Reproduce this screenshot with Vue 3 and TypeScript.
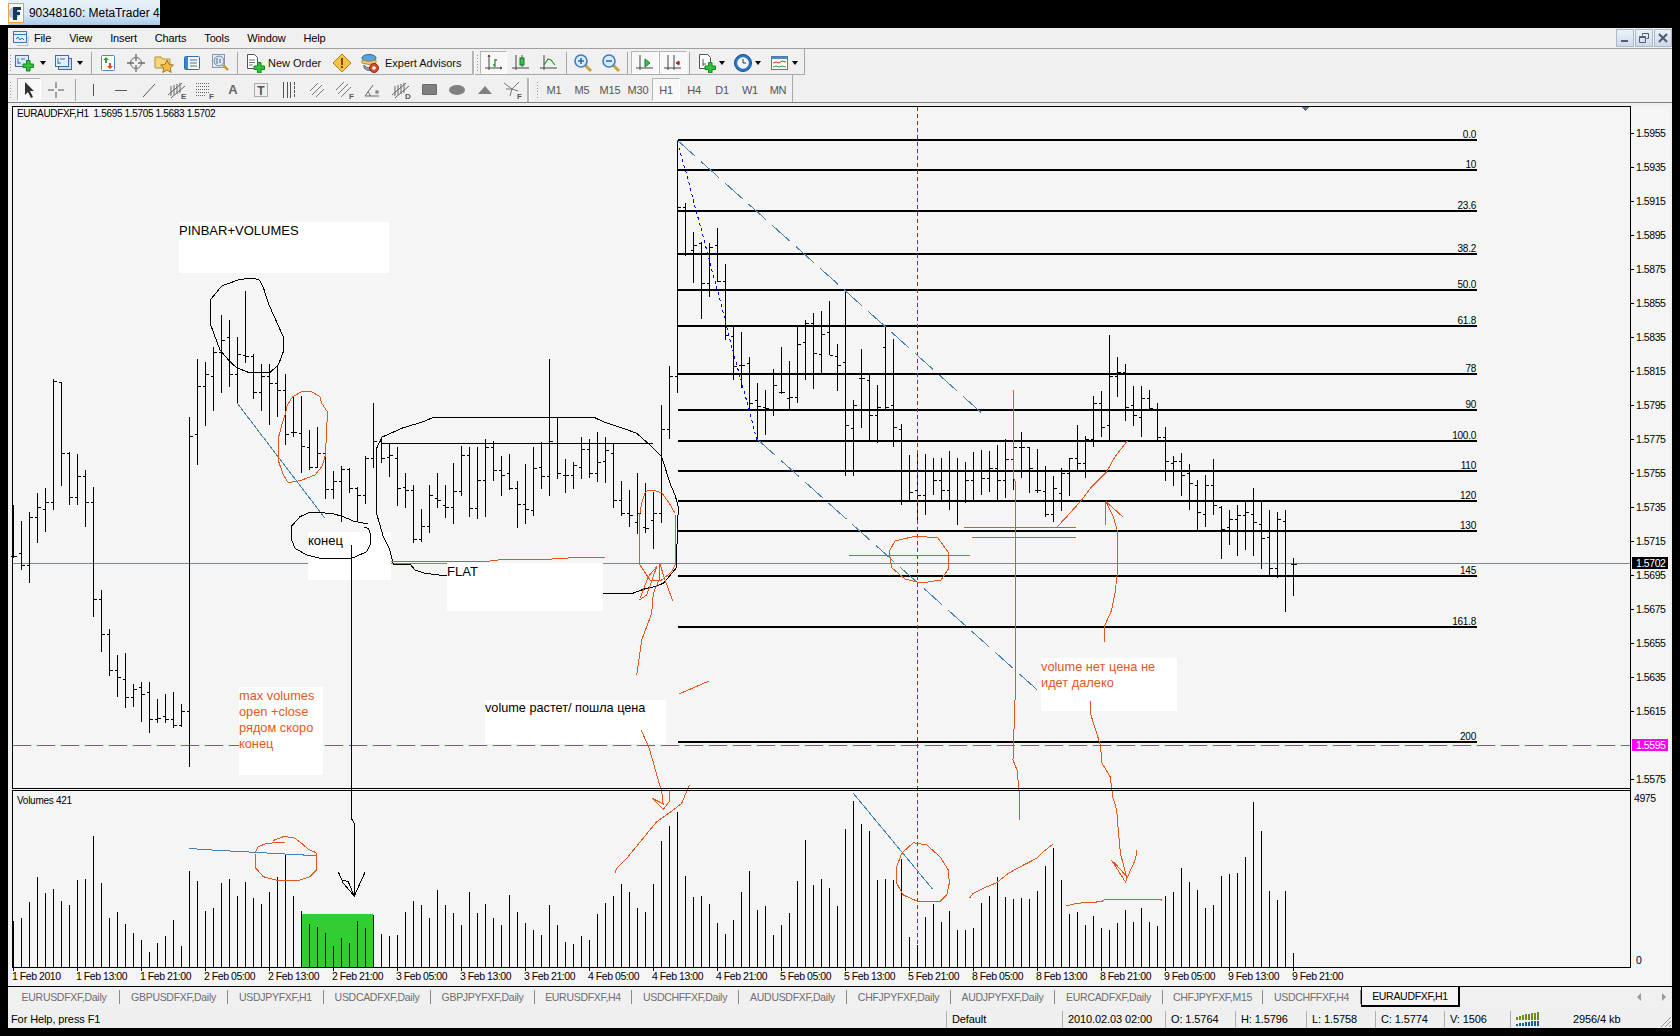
<script setup lang="ts">
/*
 * Chart data, all y values are page pixels
 */

type Bar = [number, number, number, number];

// high, low, open, close
const bars: Bar[] = [
  [505, 558, 556, 556], [521, 570, 553, 565], [512, 583, 565, 517], [493, 543, 517, 507], [488, 532, 509, 502],
  [379, 510, 502, 381], [383, 486, 382, 453], [452, 505, 453, 497], [454, 505, 497, 476], [470, 527, 476, 502],
  [487, 617, 502, 599], [590, 652, 599, 634], [629, 676, 634, 670], [655, 697, 670, 677], [653, 708, 679, 697],
  [684, 707, 697, 689], [682, 722, 687, 694], [682, 733, 692, 719], [699, 723, 719, 718], [694, 723, 716, 719],
  [692, 728, 719, 725], [704, 727, 725, 711], [417, 767, 711, 436], [359, 465, 434, 386], [362, 426, 386, 374],
  [347, 411, 376, 352], [315, 393, 352, 340], [320, 387, 337, 374], [337, 403, 374, 354], [291, 363, 355, 356],
  [354, 399, 356, 392], [364, 411, 392, 376], [364, 425, 376, 383], [366, 417, 383, 390], [374, 445, 390, 434],
  [397, 437, 432, 432], [396, 473, 433, 446], [430, 470, 447, 467], [427, 467, 467, 453], [449, 499, 453, 489],
  [471, 499, 489, 481], [466, 522, 481, 469], [468, 493, 469, 488], [487, 522, 488, 495], [456, 504, 495, 458],
  [403, 468, 458, 441], [437, 463, 441, 458], [443, 477, 457, 455], [447, 506, 458, 488], [473, 508, 487, 490],
  [485, 543, 490, 539], [509, 542, 539, 526], [485, 533, 526, 495], [473, 508, 498, 500], [485, 518, 505, 507],
  [463, 524, 507, 491], [446, 496, 491, 455], [447, 517, 455, 508], [447, 519, 508, 480], [439, 517, 480, 447],
  [441, 481, 447, 470], [456, 496, 470, 475], [454, 490, 473, 488], [481, 528, 488, 504], [464, 524, 504, 509],
  [447, 516, 510, 468], [442, 489, 467, 476], [359, 496, 476, 441], [417, 479, 443, 473], [459, 493, 475, 475],
  [462, 489, 475, 465], [437, 479, 467, 449], [439, 478, 449, 473], [432, 482, 473, 462], [437, 483, 461, 450],
  [443, 508, 453, 500], [481, 516, 500, 513], [490, 527, 513, 515], [473, 534, 522, 513], [483, 533, 527, 528],
  [492, 549, 520, 513], [405, 523, 513, 429], [366, 439, 429, 376], [141, 393, 376, 207], [203, 256, 207, 253],
  [232, 283, 250, 245], [242, 319, 243, 283], [243, 297, 283, 247], [228, 282, 245, 281], [264, 340, 281, 335],
  [327, 380, 336, 366], [332, 388, 365, 365], [357, 409, 363, 403], [383, 441, 400, 406], [390, 435, 407, 408],
  [369, 416, 410, 385], [347, 394, 392, 392], [361, 409, 398, 397], [327, 403, 397, 344], [320, 380, 342, 323],
  [313, 389, 323, 353], [311, 373, 354, 334], [301, 355, 332, 355], [344, 391, 356, 365], [290, 476, 362, 425],
  [400, 476, 428, 405], [349, 428, 378, 378], [374, 440, 380, 415], [385, 443, 415, 407], [327, 409, 347, 407],
  [339, 447, 405, 427], [424, 505, 429, 470], [455, 500, 470, 492], [450, 520, 490, 495], [454, 515, 495, 470],
  [458, 495, 470, 480], [458, 502, 480, 490], [451, 510, 490, 470], [458, 525, 470, 500], [462, 503, 500, 480],
  [452, 500, 480, 470], [450, 495, 470, 478], [451, 492, 478, 468], [445, 500, 468, 480], [439, 498, 480, 459],
  [430, 490, 459, 447], [432, 478, 447, 447], [447, 493, 447, 468], [449, 493, 490, 490], [466, 517, 491, 514],
  [476, 522, 514, 488], [468, 511, 493, 473], [458, 496, 473, 458], [425, 470, 458, 463], [436, 478, 463, 439],
  [396, 447, 439, 403], [391, 437, 403, 427], [335, 440, 425, 376], [357, 397, 376, 372], [364, 421, 372, 407],
  [386, 426, 405, 415], [386, 437, 417, 398], [390, 409, 398, 408], [403, 440, 409, 437], [427, 481, 437, 461],
  [456, 486, 463, 461], [453, 496, 461, 475], [464, 510, 473, 483], [480, 532, 485, 512], [475, 527, 514, 485],
  [459, 515, 485, 505], [506, 559, 507, 529], [510, 545, 527, 519], [505, 556, 519, 515], [501, 550, 515, 512],
  [488, 556, 514, 522], [501, 569, 524, 538], [510, 577, 537, 568], [512, 578, 568, 519], [510, 612, 521, 576],
  [558, 596, 564, 564],
];

// top of every volume bar, they all stand on y=967
const volumes: number[] = [
  921, 918, 902, 877, 893, 889, 901, 905, 880, 879, 836, 883, 918, 912, 924, 933, 940, 952, 943, 936,
  920, 946, 871, 881, 911, 908, 883, 879, 896, 882, 898, 904, 892, 877, 854, 896, 911, 924, 927, 933,
  946, 938, 943, 921, 928, 915, 934, 936, 935, 912, 901, 905, 918, 890, 905, 913, 925, 892, 913, 904,
  918, 925, 895, 912, 923, 930, 935, 905, 925, 942, 944, 936, 940, 914, 903, 896, 884, 892, 908, 912,
  884, 841, 826, 812, 876, 897, 896, 904, 923, 934, 920, 892, 871, 910, 906, 935, 925, 913, 881, 840,
  885, 879, 888, 906, 829, 801, 824, 831, 880, 879, 880, 859, 937, 945, 917, 904, 922, 911, 930, 930,
  928, 903, 896, 877, 897, 899, 898, 899, 891, 866, 848, 880, 914, 912, 925, 916, 928, 930, 923, 910,
  922, 908, 922, 926, 896, 892, 868, 882, 890, 908, 905, 876, 874, 873, 857, 802, 831, 891, 900, 891,
  953,
];

const fibLevels = [
  { y: 140, label: "0.0" },
  { y: 170, label: "10" },
  { y: 211, label: "23.6" },
  { y: 254, label: "38.2" },
  { y: 290, label: "50.0" },
  { y: 326, label: "61.8" },
  { y: 374, label: "78" },
  { y: 410, label: "90" },
  { y: 441, label: "100.0" },
  { y: 471, label: "110" },
  { y: 501, label: "120" },
  { y: 531, label: "130" },
  { y: 576, label: "145" },
  { y: 627, label: "161.8" },
  { y: 742, label: "200" },
];

const priceLabels = Array.from({ length: 20 }, (_, i) => ({
  y: 133 + 34 * i,
  text: (1.5955 - 0.002 * i).toFixed(4),
})).filter((p) => p.text !== "1.5595");

const timeLabels = [
  "1 Feb 2010", "1 Feb 13:00", "1 Feb 21:00", "2 Feb 05:00", "2 Feb 13:00", "2 Feb 21:00", "3 Feb 05:00",
  "3 Feb 13:00", "3 Feb 21:00", "4 Feb 05:00", "4 Feb 13:00", "4 Feb 21:00", "5 Feb 05:00", "5 Feb 13:00",
  "5 Feb 21:00", "8 Feb 05:00", "8 Feb 13:00", "8 Feb 21:00", "9 Feb 05:00", "9 Feb 13:00", "9 Feb 21:00",
];

const chartCaption = "EURAUDFXF,H1  1.5695 1.5705 1.5683 1.5702";

const barsPath = bars
  .map((b, i) => {
    const x = 13.5 + 8 * i;
    return `M${x} ${b[0]}V${b[1]}M${x - 3} ${b[2] + 0.5}H${x}M${x} ${b[3] + 0.5}H${x + 3}`;
  })
  .join("");

const volumesPath = volumes.map((top, i) => `M${13.5 + 8 * i} ${top}V967`).join("");

/*
 * Hand drawn marks, traced from crops: origin, horizontal scale, then x,y pairs
 */

function trace(ox: number, oy: number, sx: number, raw: number[]) {
  const out: string[] = [];
  for (let i = 0; i < raw.length; i += 2) {
    out.push(`${(ox + raw[i] / sx).toFixed(1)},${(oy + raw[i + 1] / 3).toFixed(1)}`);
  }
  return out.join(" ");
}

const blueLines = [
  trace(0, 200, 3, [712, 610, 975, 955]),
  trace(0, 560, 3, [567, 865, 600, 868, 650, 871, 705, 874, 765, 877, 815, 880, 870, 883, 950, 887]),
  trace(560, 760, 3, [880, 100, 1118, 388]),
];

const blackMarks = [
  trace(0, 200, 3, [760, 235, 778, 240, 790, 262, 805, 310, 825, 355, 850, 410, 850, 455, 835, 495, 810, 517, 745, 517, 710, 503, 690, 485, 660, 450, 632, 375, 631, 300, 665, 258, 720, 238, 760, 235]),
  trace(0, 200, 3, [1105, 972, 1060, 963, 1030, 950, 995, 940, 930, 937, 900, 950, 875, 978, 875, 1020, 885, 1045, 920, 1065, 960, 1075, 1055, 1075, 1100, 1055, 1112, 1030, 1112, 1005, 1105, 985, 1092, 982]),
  trace(0, 560, 3, [1054, -45, 1054, 775, 1063, 790, 1063, 1005]),
  trace(0, 560, 3, [1015, 935, 1030, 970, 1063, 1008, 1095, 937]),
  trace(0, 560, 3, [1015, 935, 1025, 960, 1045, 965, 1055, 990, 1063, 1008]),
  trace(360, 340, 3, [100, 672, 88, 625, 70, 590, 50, 522, 50, 325, 65, 292, 130, 263, 190, 245, 220, 232, 702, 232, 730, 245, 790, 265, 830, 280, 870, 315, 905, 350, 930, 430, 945, 465, 955, 500, 952, 590, 948, 685, 910, 730, 890, 738, 850, 748, 818, 760, 730, 760]),
  trace(360, 340, 3, [100, 672, 150, 672, 165, 690, 195, 700, 262, 708]),
  trace(360, 340, 3, [62, 310, 878, 310]),
];

const redMarks = [
  trace(0, 200, 3, [905, 575, 935, 575, 960, 590, 965, 610, 982, 635, 980, 700, 975, 770, 965, 800, 945, 825, 900, 842, 865, 848, 850, 825, 836, 785, 835, 715, 845, 675, 855, 645, 862, 615, 878, 590, 905, 575]),
  trace(360, 340, 3, [92, 664, 385, 664, 420, 659, 560, 658, 640, 653, 735, 653]),
  trace(360, 340, 3, [860, 452, 880, 451, 905, 458, 928, 490, 945, 520, 947, 670, 935, 695, 905, 720, 870, 720, 838, 672, 838, 530, 845, 490, 855, 460, 860, 452]),
  trace(360, 340, 3, [838, 780, 860, 765, 890, 680, 865, 710, 840, 775]),
  trace(360, 340, 3, [900, 672, 897, 720, 880, 760, 875, 820, 860, 860, 845, 900, 830, 1005]),
  trace(360, 340, 3, [900, 672, 915, 720, 938, 782]),
  "641,730 648,745 652.7,760 656.7,775 661.7,791.7 663.3,805",
  "679,694 709,681",
  trace(560, 760, 3, [277, 115, 310, 148, 328, 125, 330, 90]),
  trace(560, 760, 3, [277, 115, 310, 132]),
  trace(560, 760, 3, [165, 340, 170, 325, 200, 295, 245, 240, 290, 185, 340, 150, 365, 130, 388, 75]),
  trace(560, 760, 3, [1060, 248, 1100, 255, 1140, 290, 1165, 330, 1168, 370, 1160, 405, 1140, 425, 1075, 425, 1030, 405, 1010, 370, 1010, 320, 1025, 280, 1060, 248]),
  "1013,390 1013,477 1015,481 1015,700 1013,760 1017,770 1019,790 1020,820",
  trace(560, 760, 3, [1228, 415, 1240, 400, 1270, 385, 1310, 368, 1345, 340, 1385, 318, 1430, 295, 1450, 275, 1478, 253]),
  "964,527 1076,527",
  "972,537 1076,537",
  trace(1000, 320, 3, [172, 620, 200, 590, 245, 540, 275, 500, 320, 455, 345, 410, 382, 363]),
  trace(1000, 320, 3, [313, 965, 313, 920, 335, 870, 345, 820, 352, 760, 352, 633, 340, 590, 318, 545, 316, 615]),
  trace(1000, 320, 3, [318, 545, 368, 590]),
  "849,555 970,555",
  "895,541 916,536 938,538 948,552 949,568 941,580 921,583 905,579 892,568 889,552 895,541",
  trace(0, 560, 3, [818, 842, 850, 830, 880, 832, 905, 850, 925, 868, 948, 878, 950, 930, 930, 950, 895, 962, 835, 962, 790, 950, 768, 925, 765, 880, 775, 860, 800, 850, 855, 847]),
  trace(1040, 640, 2.45, [65, 798, 90, 790, 150, 785, 160, 778, 298, 778, 298, 782]),
  trace(1040, 640, 2.45, [123, 183, 124, 222, 135, 265, 148, 315, 152, 370, 172, 410, 178, 470, 188, 510, 192, 575, 197, 640, 213, 715]),
  trace(1040, 640, 2.45, [213, 715, 235, 655, 236, 630]),
  trace(1040, 640, 2.45, [175, 660, 210, 727, 213, 710, 180, 665]),
];

const dotted = trace(660, 120, 3, [52, 65, 70, 130, 85, 180, 105, 260, 130, 350, 150, 430, 175, 520, 195, 600, 215, 680, 240, 770, 265, 860, 290, 960]);

/*
 * Window chrome
 */

const menuItems = ["File", "View", "Insert", "Charts", "Tools", "Window", "Help"];
const periods = ["M1", "M5", "M15", "M30", "H1", "H4", "D1", "W1", "MN"];

const chartTabs = [
  { name: "EURUSDFXF,Daily", width: 111 },
  { name: "GBPUSDFXF,Daily", width: 108 },
  { name: "USDJPYFXF,H1", width: 96 },
  { name: "USDCADFXF,Daily", width: 107 },
  { name: "GBPJPYFXF,Daily", width: 104 },
  { name: "EURUSDFXF,H4", width: 97 },
  { name: "USDCHFFXF,Daily", width: 107 },
  { name: "AUDUSDFXF,Daily", width: 108 },
  { name: "CHFJPYFXF,Daily", width: 104 },
  { name: "AUDJPYFXF,Daily", width: 104 },
  { name: "EURCADFXF,Daily", width: 108 },
  { name: "CHFJPYFXF,M15", width: 100 },
  { name: "USDCHFFXF,H4", width: 98 },
];

const statusCells = [
  { text: "Default", width: 116 },
  { text: "2010.02.03 02:00", width: 103 },
  { text: "O: 1.5764", width: 70 },
  { text: "H: 1.5796", width: 71 },
  { text: "L: 1.5758", width: 69 },
  { text: "C: 1.5774", width: 69 },
  { text: "V: 1506", width: 66 },
];
</script>

<template>
  <div class="screen">
    <div class="titlebar">
      <div class="title-pad"></div>
      <div class="title-tab">
        <svg class="logo" width="16" height="20" viewBox="0 0 16 20">
          <rect x="0.5" y="0.5" width="15" height="19" fill="#fff" stroke="#f0a030" />
          <circle cx="6" cy="10" r="5.5" fill="#b9c6d6" />
          <path d="M5 4h8v3H9v2h3v3H9v5H5z" fill="#12395f" />
        </svg>
        <span class="title-text">90348160: MetaTrader 4</span>
      </div>
    </div>

    <div class="window">
      <div class="menubar">
        <svg class="doc-icon" width="16" height="17" viewBox="0 0 16 17">
          <rect x="0.5" y="1.5" width="13" height="11" fill="#e2eefa" stroke="#3f78b8" />
          <path d="M0.5 4.5h13" stroke="#3f78b8" />
          <path d="M4 15.5h11V6" fill="none" stroke="#a9c4e4" />
          <path d="M3 9l2-2 2 3 2-2 2 2" fill="none" stroke="#2f6fb0" />
        </svg>
        <span v-for="item in menuItems" :key="item" class="menu-item">{{ item }}</span>
        <div class="win-buttons">
          <button class="win-btn">
            <svg width="10" height="10" viewBox="0 0 10 10"><rect x="1" y="7" width="7" height="2" fill="#4f6074" /></svg>
          </button>
          <button class="win-btn">
            <svg width="10" height="10" viewBox="0 0 10 10"><path d="M3.5 2.5V.5h6v5h-2M.5 3.5h6v6h-6zM.5 4.5h6" fill="none" stroke="#4f6074" /></svg>
          </button>
          <button class="win-btn">
            <svg width="10" height="10" viewBox="0 0 10 10"><path d="M1 1l8 8M9 1l-8 8" stroke="#4f6074" stroke-width="2.2" /></svg>
          </button>
        </div>
      </div>

      <div class="toolbars">
        <div class="tools row-one">
          <span class="grip"></span>
          <span class="ico-box w20">
            <svg width="20" height="20" viewBox="0 0 20 20">
              <rect x="0.5" y="2.5" width="13" height="11" fill="#dcebfa" stroke="#3c6ea5" />
              <path d="M3 5v6M3 10h3M6 6h4" stroke="#3c6ea5" fill="none" />
              <path d="M8 11h3.500V7.500h3.500V11h3.500v3.500H15V18h-3.500v-3.500H8z" fill="#2fc43b" stroke="#12851c" />
            </svg>
          </span>
          <span class="drop w16"></span>
          <span class="ico-box w20 ml3">
            <svg width="20" height="20" viewBox="0 0 20 20">
              <rect x="4.500" y="5.500" width="13" height="11" fill="#c9ddf2" stroke="#3c6ea5" />
              <rect x="1.500" y="2.500" width="13" height="11" fill="#e6f0fb" stroke="#3c6ea5" />
              <path d="M4 5v6M4 10h3M6 6h5" stroke="#3c6ea5" fill="none" />
            </svg>
          </span>
          <span class="drop w12"></span>
          <span class="sep ml5"></span>
          <span class="btn ml2">
            <svg width="20" height="20" viewBox="0 0 20 20">
              <rect x="3.500" y="2.500" width="13" height="15" rx="1" fill="#fff" stroke="#4f87c4" />
              <path d="M8 4l3 3H9v3H7V7H5z" fill="#27a33a" />
              <path d="M12 16l-3-3h2v-3h2v3h2z" fill="#d9482b" />
            </svg>
          </span>
          <span class="btn">
            <svg width="20" height="20" viewBox="0 0 20 20" fill="none" stroke="#6b6b6b">
              <circle cx="10" cy="10" r="5.500" />
              <path d="M10 1v7M10 12v7M1 10h7M12 10h7" stroke-width="1.300" />
            </svg>
          </span>
          <span class="btn">
            <svg width="20" height="20" viewBox="0 0 20 20">
              <path d="M1 4h6l2 2h7v9H1z" fill="#f5d77e" stroke="#b98f2e" />
              <path d="M13 7l2 4.500 4.500.500-3.300 3 1 4.500-4.200-2.400-4.200 2.400 1-4.500-3.300-3 4.500-.500z" fill="#f0c040" stroke="#a3742a" />
            </svg>
          </span>
          <span class="btn">
            <svg width="20" height="20" viewBox="0 0 20 20">
              <rect x="2.500" y="3.500" width="15" height="13" rx="1" fill="#f5f9fe" stroke="#2a6cb0" />
              <rect x="3" y="4" width="3" height="12" fill="#3c87cf" />
              <path d="M8 7h7M8 10h7M8 13h7" stroke="#4a6c90" />
            </svg>
          </span>
          <span class="btn">
            <svg width="20" height="20" viewBox="0 0 20 20">
              <rect x="2.500" y="1.500" width="12" height="13" fill="#e8edf3" stroke="#8a98a8" />
              <circle cx="9" cy="8" r="5" fill="#d7e6f5" stroke="#6a88a8" />
              <path d="M7 5v6M10 6v4" stroke="#5a6c80" />
              <path d="M13 12l5 5" stroke="#c9932e" stroke-width="2.400" />
            </svg>
          </span>
          <span class="sep ml3"></span>
          <span class="ico-box w20 ml7">
            <svg width="20" height="20" viewBox="0 0 20 20">
              <path d="M2.500 1.500h7l3 3v11h-10z" fill="#fff" stroke="#555" />
              <path d="M4 7h6M4 9.500h6M4 12h4" stroke="#777" />
              <path d="M9 13h3.500V9.500H16V13h3.500v3.500H16V20h-3.500v-3.500H9z" fill="#2fc43b" stroke="#12851c" />
            </svg>
          </span>
          <span class="tool-text order-text">New Order</span>
          <span class="btn ml5">
            <svg width="20" height="20" viewBox="0 0 20 20">
              <path d="M10 1l9 9-9 9-9-9z" fill="#f6c344" stroke="#b97f1c" />
              <rect x="9" y="5" width="2" height="7" fill="#7a4a10" />
              <rect x="9" y="13" width="2" height="2" fill="#7a4a10" />
            </svg>
          </span>
          <span class="btn">
            <svg width="22" height="22" viewBox="0 0 22 22">
              <ellipse cx="10" cy="6" rx="7" ry="3.500" fill="#5aa4dc" stroke="#28689c" />
              <path d="M3 8q7 3 14 0v3q-7 3-14 0z" fill="#f2c778" stroke="#b98f2e" />
              <path d="M5 13q5 6 10 0v3q-5 5-10 0z" fill="#8ea6bf" stroke="#52687e" />
              <circle cx="15" cy="16" r="4.500" fill="#d9482b" stroke="#8f2c14" />
              <circle cx="15" cy="16" r="1.800" fill="#fff" />
            </svg>
          </span>
          <span class="tool-text advisors-text">Expert Advisors</span>
          <span class="split ml10"></span>
          <span class="grip grip-small"></span>
          <span class="btn active w27">
            <svg width="20" height="20" viewBox="0 0 20 20" fill="none" stroke="#444">
              <path d="M5 2v15M1 15h17M5 2l-1 2M5 2l1 2M18 15l-2-1M18 15l-2 1" />
              <path d="M11 6v8M9 12h2M11 7h2" stroke="#1e9a35" stroke-width="1.300" />
            </svg>
          </span>
          <span class="btn">
            <svg width="20" height="20" viewBox="0 0 20 20" fill="none" stroke="#444">
              <path d="M5 2v15M1 15h17" />
              <path d="M11 2v12" stroke="#1b6e2a" />
              <rect x="9" y="5" width="4" height="7" fill="#39c24a" stroke="#1b6e2a" />
            </svg>
          </span>
          <span class="btn">
            <svg width="20" height="20" viewBox="0 0 20 20" fill="none" stroke="#444">
              <path d="M5 2v15M1 15h17" />
              <path d="M5 12l4-6 3 1 4 5" stroke="#1e9a35" stroke-width="1.200" />
            </svg>
          </span>
          <span class="sep ml3"></span>
          <span class="btn ml2">
            <svg width="20" height="20" viewBox="0 0 20 20">
              <path d="M12 12l6 6" stroke="#c9a33e" stroke-width="3" />
              <circle cx="8" cy="8" r="6" fill="#dcebfa" stroke="#3c7dbf" stroke-width="1.600" />
              <path d="M5 8h6M8 5v6" stroke="#2a6cb0" stroke-width="1.600" />
            </svg>
          </span>
          <span class="btn">
            <svg width="20" height="20" viewBox="0 0 20 20">
              <path d="M12 12l6 6" stroke="#c9a33e" stroke-width="3" />
              <circle cx="8" cy="8" r="6" fill="#dcebfa" stroke="#3c7dbf" stroke-width="1.600" />
              <path d="M5 8h6" stroke="#2a6cb0" stroke-width="1.600" />
            </svg>
          </span>
          <span class="sep ml2"></span>
          <span class="btn active ml3">
            <svg width="20" height="20" viewBox="0 0 20 20" fill="none" stroke="#444">
              <path d="M5 2v15M1 15h17" />
              <path d="M10 6l5 4-5 4z" fill="#39c24a" stroke="#1b7d2c" />
            </svg>
          </span>
          <span class="btn active">
            <svg width="20" height="20" viewBox="0 0 20 20" fill="none" stroke="#444">
              <path d="M5 2v15M1 15h17M11 2v15" />
              <path d="M17 10h-3M16 8l-3 2 3 2z" fill="#a32a1a" stroke="#a32a1a" />
            </svg>
          </span>
          <span class="sep ml2"></span>
          <span class="ico-box w20 ml7">
            <svg width="20" height="20" viewBox="0 0 20 20">
              <path d="M2.500 1.500h8l3 3v11h-11z" fill="#fff" stroke="#555" />
              <path d="M6 6v7M6 11h3" stroke="#555" />
              <path d="M8 13h3.500V9.500H15V13h3.500v3.500H15V20h-3.500v-3.500H8z" fill="#2fc43b" stroke="#12851c" />
            </svg>
          </span>
          <span class="drop w10"></span>
          <span class="ico-box w20 ml6">
            <svg width="20" height="20" viewBox="0 0 20 20">
              <circle cx="10" cy="10" r="8.500" fill="#2d78c4" stroke="#174e8c" />
              <circle cx="10" cy="10" r="5.800" fill="#f3f6fa" />
              <path d="M10 6v4h3" fill="none" stroke="#333" />
            </svg>
          </span>
          <span class="drop w10"></span>
          <span class="ico-box w20 ml7">
            <svg width="20" height="20" viewBox="0 0 20 20">
              <rect x="1.500" y="3.500" width="16" height="13" fill="#fff" stroke="#4a7bb0" />
              <rect x="2" y="4" width="15" height="2" fill="#4a8ccc" />
              <path d="M3 10l3-1 3 1 3-2 4 1" fill="none" stroke="#c0392b" />
              <path d="M3 14l3-1 3 1 3-1 4 1" fill="none" stroke="#2f9e44" />
            </svg>
          </span>
          <span class="drop w10"></span>
        </div>

        <div class="tools row-two">
          <span class="grip"></span>
          <span class="btn active w24 ml2">
            <svg width="14" height="18" viewBox="0 0 14 18"><path d="M3 1l9 9H8l3 6-2 1-3-6-3 3z" fill="#333" /></svg>
          </span>
          <span class="btn ml1">
            <svg width="18" height="18" viewBox="0 0 18 18" stroke="#555"><path d="M9 1v6M9 11v6M1 9h6M11 9h6" /></svg>
          </span>
          <span class="sep ml5"></span>
          <span class="btn ml3"><svg width="18" height="18" viewBox="0 0 18 18" stroke="#555"><path d="M9.500 3v12" /></svg></span>
          <span class="btn"><svg width="18" height="18" viewBox="0 0 18 18" stroke="#555"><path d="M3 9.500h12" /></svg></span>
          <span class="btn"><svg width="18" height="18" viewBox="0 0 18 18" stroke="#555"><path d="M3 16L15 3" /></svg></span>
          <span class="btn">
            <svg width="22" height="20" viewBox="0 0 22 20" stroke="#666" fill="none">
              <path d="M2 15L16 3M5 18L19 6M5 6v10M8 5v10M11 4v10M14 3v10" />
              <text x="15" y="19" class="ico-letter">E</text>
            </svg>
          </span>
          <span class="btn">
            <svg width="22" height="20" viewBox="0 0 22 20" stroke="#666" fill="none">
              <path d="M2 3.500h14M2 6.500h14M2 9.500h14M2 12.500h14M2 15.500h10" stroke-dasharray="1 1" />
              <text x="15" y="19" class="ico-letter">F</text>
            </svg>
          </span>
          <span class="btn"><span class="ico-a">A</span></span>
          <span class="btn">
            <svg width="18" height="18" viewBox="0 0 18 18">
              <rect x="2.500" y="2.500" width="13" height="13" fill="none" stroke="#666" stroke-dasharray="1 1" />
              <text x="9" y="14" class="ico-t">T</text>
            </svg>
          </span>
          <span class="btn">
            <svg width="18" height="18" viewBox="0 0 18 18" stroke="#555"><path d="M3.500 1v16M7.500 1v16M10.500 1v16" /><path d="M14.500 1v16" stroke-dasharray="3 1" /></svg>
          </span>
          <span class="btn">
            <svg width="18" height="18" viewBox="0 0 18 18" stroke="#777"><path d="M2 10L10 2M4 14L14 4M8 16L16 8" /></svg>
          </span>
          <span class="btn">
            <svg width="22" height="20" viewBox="0 0 22 20" stroke="#777" fill="none">
              <path d="M2 10L10 2M4 14L14 4M7 17L17 7" />
              <text x="15" y="19" class="ico-letter">F</text>
            </svg>
          </span>
          <span class="btn">
            <svg width="20" height="18" viewBox="0 0 20 18" stroke="#666" fill="none">
              <path d="M2 15h14M2 15L10 4M7 15q0-3-2-4" />
              <rect x="13" y="10" width="2" height="2" />
            </svg>
          </span>
          <span class="btn">
            <svg width="22" height="20" viewBox="0 0 22 20" stroke="#666" fill="none">
              <path d="M2 15L16 3M5 18L19 6M5 6v10M8 5v10M11 4v10M14 3v10" />
              <text x="15" y="19" class="ico-letter">D</text>
            </svg>
          </span>
          <span class="btn"><span class="shape-rect"></span></span>
          <span class="btn"><span class="shape-ellipse"></span></span>
          <span class="btn"><span class="shape-tri"></span></span>
          <span class="btn">
            <svg width="22" height="20" viewBox="0 0 22 20" stroke="#777" fill="none">
              <path d="M2 3l8 6 7-7M10 9l-2 7M10 9l6 2M4 9l6 0" />
              <text x="15" y="19" class="ico-letter">F</text>
            </svg>
          </span>
          <span class="split"></span>
          <span class="grip grip-small ml6"></span>
          <span
            v-for="period in periods"
            :key="period"
            class="btn period"
            :class="{ active: period === 'H1' }"
          >{{ period }}</span>
        </div>
      </div>

      <div class="chart-area">
        <svg class="chart" width="1664" height="884" viewBox="8 103 1664 884">
          <rect x="12" y="106" width="1658" height="880" fill="#f5f5f5" />

          <!-- fibonacci levels -->
          <path v-for="lvl in fibLevels" :key="lvl.label" :d="`M678 ${lvl.y}H1477`" class="fib" />
          <text v-for="lvl in fibLevels" :key="lvl.label + 't'" x="1476" :y="lvl.y - 2" class="fib-label">{{ lvl.label }}</text>

          <path d="M13 563.500H1630" class="bid" />
          <path d="M13 745.500H1631" class="ask" />

          <rect x="301" y="914" width="72" height="53" fill="#32cd32" />
          <path :d="barsPath" class="ink" />
          <path :d="volumesPath" class="ink" />
          <path d="M677.500 140V393" class="ink" />

          <path d="M917.500 107V945" class="green-dash" />
          <polyline v-for="line in blueLines" :key="line" :points="line" class="mark steel" />
          <path d="M677 140L985 416" class="mark steel trend" />
          <path d="M757 439L1063 713" class="mark steel trend" />
          <polyline :points="dotted" class="mark dots" />

          <!-- text notes on white boxes -->
          <rect x="179" y="222" width="210" height="51" fill="#fff" />
          <rect x="308" y="532" width="83" height="48" fill="#fff" />
          <rect x="447" y="563" width="156" height="48" fill="#fff" />
          <rect x="485" y="700" width="181" height="44" fill="#fff" />
          <rect x="239" y="687" width="84" height="88" fill="#fff" />
          <rect x="1041" y="658" width="136" height="53" fill="#fff" />

          <text x="179" y="235" class="note">PINBAR+VOLUMES</text>
          <text x="308" y="545" class="note">конец</text>
          <text x="447" y="576" class="note">FLAT</text>
          <text x="485" y="712" class="note small">volume растет/ пошла цена</text>
          <text x="239" y="700" class="note red">max volumes</text>
          <text x="239" y="716" class="note red">open +close</text>
          <text x="239" y="732" class="note red">рядом скоро</text>
          <text x="239" y="748" class="note red">конец</text>
          <text x="1041" y="671" class="note red">volume нет цена не</text>
          <text x="1041" y="687" class="note red">идет далеко</text>

          <polyline v-for="line in blackMarks" :key="line" :points="line" class="mark black" />
          <polyline v-for="line in redMarks" :key="line" :points="line" class="mark orange" />

          <!-- frames and axes -->
          <path d="M12.500 788.500V106.500H1630.500V967.500H12.500V790.500H1630.500M12.500 788.500H1630.500" class="frame" />
          <path d="M1301 107h8l-4 4z" fill="#5f7284" />
          <text x="17" y="117" class="axis title caption">{{ chartCaption }}</text>
          <text x="17" y="804" class="axis title">Volumes 421</text>

          <g v-for="p in priceLabels" :key="p.text">
            <path :d="`M1631 ${p.y + 0.5}h3`" class="ink" />
            <text x="1636" :y="p.y + 3.500" class="axis">{{ p.text }}</text>
          </g>
          <rect x="1632" y="557" width="36" height="12" fill="#000" />
          <text x="1636" y="567" class="axis white">1.5702</text>
          <rect x="1632" y="739" width="36" height="12" fill="#ff00ff" />
          <text x="1636" y="749" class="axis white">1.5595</text>
          <text x="1634" y="802" class="axis">4975</text>
          <text x="1636" y="964" class="axis">0</text>

          <g v-for="(label, i) in timeLabels" :key="label">
            <path :d="`M${13.5 + 64 * i} 967v4`" class="ink" />
            <text :x="12 + 64 * i" y="980" class="axis">{{ label }}</text>
          </g>
          <path d="M8 986.500H1672" class="frame" />
        </svg>
      </div>

      <div class="tabs">
        <span v-for="tab in chartTabs" :key="tab.name" class="tab" :style="{ width: tab.width + 'px' }">{{ tab.name }}</span>
        <span class="tab-active">EURAUDFXF,H1</span>
        <span class="tab-arrows">
          <svg width="30" height="8" viewBox="0 0 30 8" fill="#9a9a9a"><path d="M4 0v8L0 4zM25 0v8l4-4z" /></svg>
        </span>
      </div>

      <div class="statusbar">
        <span class="status-help">For Help, press F1</span>
        <span
          v-for="cell in statusCells"
          :key="cell.text"
          class="status-cell"
          :style="{ width: cell.width + 'px' }"
        >{{ cell.text }}</span>
        <span class="status-cell conn">
          <svg width="24" height="14" viewBox="0 0 24 14">
            <path d="M1 5v3M4 4v4M7 3v5M10 2v6M13 2v6M16 1v7M19 1v7M22 0v8" stroke="#6e8b1f" stroke-width="2" />
            <path d="M1 12v2M4 11v3M7 11v3M10 10v4M13 10v4M16 9v5M19 9v5M22 9v5" stroke="#1f5f8b" stroke-width="2" />
          </svg>
        </span>
        <span class="status-kb">2956/4 kb</span>
        <svg class="resize" width="14" height="14" viewBox="0 0 14 14" stroke="#999">
          <path d="M13 3L3 13M13 7l-6 6M13 11l-2 2" />
        </svg>
      </div>
    </div>
  </div>
</template>

<style scoped>
.screen {
  width: 1680px;
  height: 1036px;
  display: flex;
  flex-direction: column;
  background: #000;
  overflow: hidden;
  font-family: "Liberation Sans", Arial, sans-serif;
  font-size: 11px;
  color: #000;
}

.titlebar {
  height: 28px;
  flex: none;
  display: flex;
  align-items: flex-start;
}

.title-pad {
  width: 8px;
  height: 25px;
  background: #fff;
}

.title-tab {
  width: 152px;
  height: 25px;
  display: flex;
  align-items: center;
  gap: 5px;
  font-size: 12px;
  letter-spacing: -0.05px;
  background: linear-gradient(#e9f2fa, #d8e7f4 55%, #a9cbe8);
}

.title-text {
  white-space: nowrap;
}

.logo {
  flex: none;
}

.window {
  flex: 1;
  min-height: 0;
  margin: 0 8px 8px;
  display: flex;
  flex-direction: column;
  background: #f0f0f0;
}

.menubar {
  height: 20px;
  flex: none;
  display: flex;
  align-items: center;
  gap: 18px;
  padding-left: 5px;
  border-bottom: 1px solid #a0a0a0;
  letter-spacing: -0.15px;
}

.doc-icon {
  margin-right: -13px;
}

.win-buttons {
  margin-left: auto;
  display: flex;
  gap: 1px;
}

.win-btn {
  width: 18px;
  height: 18px;
  padding: 0;
  display: flex;
  align-items: center;
  justify-content: center;
  border: 1px solid #aab9cc;
  background: linear-gradient(#edf1f7, #cdd9ea);
}

.toolbars {
  height: 54px;
  flex: none;
  border-bottom: 1px solid #808080;
  box-sizing: border-box;
}

.tools {
  display: flex;
  align-items: center;
  box-sizing: border-box;
  border-right: 1px solid #a8a8a8;
}

.row-one {
  width: 797px;
  height: 26px;
  padding-top: 2px;
  border-bottom: 1px solid #a8a8a8;
}

.row-two {
  width: 785px;
  height: 27px;
  padding-top: 2px;
}

.grip {
  width: 4px;
  height: 18px;
  margin: 0 2px 0 1px;
  background-image: radial-gradient(#9a9a9a 40%, transparent 45%);
  background-size: 3px 3px;
}

.grip-small {
  margin: 0 1px;
  width: 3px;
}

.btn {
  width: 28px;
  height: 23px;
  flex: none;
  display: flex;
  align-items: center;
  justify-content: center;
  box-sizing: border-box;
}

.btn.active {
  background: #f8f8f8;
  border: 1px solid;
  border-color: #b4b4b4 #fff #fff #b4b4b4;
}

.ico-box {
  height: 23px;
  flex: none;
  display: flex;
  align-items: center;
  justify-content: center;
}

.w10 { width: 10px; }
.w12 { width: 12px; }
.w16 { width: 16px; }
.w20 { width: 20px; }
.w24 { width: 24px; }
.w27 { width: 27px; }
.ml1 { margin-left: 1px; }
.ml2 { margin-left: 2px; }
.ml3 { margin-left: 3px; }
.ml4 { margin-left: 4px; }
.ml5 { margin-left: 5px; }
.ml6 { margin-left: 6px; }
.ml7 { margin-left: 7px; }
.ml10 { margin-left: 10px; }

.drop {
  height: 23px;
  flex: none;
  position: relative;
}

.drop::after {
  content: "";
  position: absolute;
  left: 50%;
  top: 10px;
  margin-left: -3px;
  border: 3px solid transparent;
  border-top: 4px solid #000;
}

.sep {
  width: 1px;
  height: 22px;
  flex: none;
  background: #a8a8a8;
}

.split {
  width: 2px;
  height: 24px;
  flex: none;
  background: #b4b4b4;
  border-right: 1px solid #fff;
}

.tool-text {
  flex: none;
  white-space: nowrap;
  color: #111;
}

.order-text {
  width: 55px;
  margin-left: 3px;
}

.advisors-text {
  width: 77px;
  margin-left: 1px;
}

.period {
  color: #555;
  font-size: 11px;
  letter-spacing: -0.2px;
}

.ico-letter {
  font: 700 8px "Liberation Sans", Arial, sans-serif;
  fill: #555;
  stroke: none;
}

.ico-t {
  font: 700 12px "Liberation Sans", Arial, sans-serif;
  fill: #555;
  text-anchor: middle;
}

.ico-a {
  font-size: 13px;
  font-weight: 700;
  color: #666;
}

.shape-rect {
  width: 13px;
  height: 9px;
  border-radius: 1px;
  background: #808080;
  border: 1px solid #6a6a6a;
}

.shape-ellipse {
  width: 16px;
  height: 10px;
  border-radius: 50%;
  background: #808080;
}

.shape-tri {
  width: 0;
  height: 0;
  border: 7px solid transparent;
  border-top: 0;
  border-bottom: 8px solid #808080;
}

.chart-area {
  height: 884px;
  flex: none;
}

.chart {
  display: block;
  shape-rendering: crispEdges;
}

.fib {
  stroke: #000;
  stroke-width: 2px;
  fill: none;
}

.fib-label {
  font-size: 10px;
  letter-spacing: -0.25px;
  text-anchor: end;
}

.bid {
  stroke: #778899;
  fill: none;
}

.ask {
  stroke: #ff00ff;
  stroke-dasharray: 18 6;
  fill: none;
}

.ink {
  stroke: #000;
  fill: none;
}

.green-dash {
  stroke: #008000;
  stroke-dasharray: 4 3;
  fill: none;
}

.mark {
  fill: none;
}

.steel {
  stroke: #4682b4;
}

.trend {
  stroke-dasharray: 24 8;
}

.dots {
  stroke: #0000ff;
  stroke-dasharray: 3 3;
}

.black {
  stroke: #000;
}

.orange {
  stroke: #e2571e;
}

.note {
  font-size: 13px;
  fill: #000;
}

.note.small {
  font-size: 12.700px;
}

.note.red {
  font-size: 12.800px;
  fill: #e2571e;
}

.frame {
  stroke: #000;
  fill: none;
}

.axis {
  font-size: 10.500px;
  letter-spacing: -0.45px;
  fill: #000;
}

.axis.title {
  font-size: 10px;
  letter-spacing: -0.27px;
  white-space: pre;
}

.axis.caption {
  letter-spacing: -0.33px;
}

.axis.white {
  fill: #fff;
}

.tabs {
  height: 20px;
  flex: none;
  display: flex;
  align-items: center;
  padding-left: 1px;
  font-size: 10.500px;
  letter-spacing: -0.3px;
  color: #6e6e6e;
  position: relative;
}

.tab {
  height: 14px;
  flex: none;
  line-height: 14px;
  text-align: center;
  box-sizing: border-box;
  border-right: 1px solid #8a8a8a;
  white-space: nowrap;
}

.tab-active {
  width: 99px;
  height: 20px;
  flex: none;
  box-sizing: border-box;
  text-align: center;
  line-height: 18px;
  color: #000;
  background: #f5f5f5;
  border: 1px solid #000;
  border-top: 0;
  border-width: 0 2px 2px 1px;
}

.tab-arrows {
  margin-left: auto;
  margin-right: 5px;
  display: flex;
}

.statusbar {
  height: 21px;
  flex: none;
  box-sizing: border-box;
  padding-top: 3px;
  display: flex;
  align-items: center;
  position: relative;
  background: #efefef;
  letter-spacing: -0.1px;
}

.status-help {
  width: 938px;
  padding-left: 3px;
  box-sizing: border-box;
  flex: none;
}

.status-cell {
  height: 17px;
  flex: none;
  box-sizing: border-box;
  padding-left: 5px;
  line-height: 17px;
  border-left: 1px solid #b0b0b0;
  white-space: nowrap;
}

.status-cell.conn {
  width: 63px;
  display: flex;
  align-items: center;
}

.status-kb {
  flex: none;
}

.resize {
  position: absolute;
  right: 0;
  bottom: 0;
}
</style>

<style>
html,
body {
  margin: 0;
  background: #000;
}
</style>
